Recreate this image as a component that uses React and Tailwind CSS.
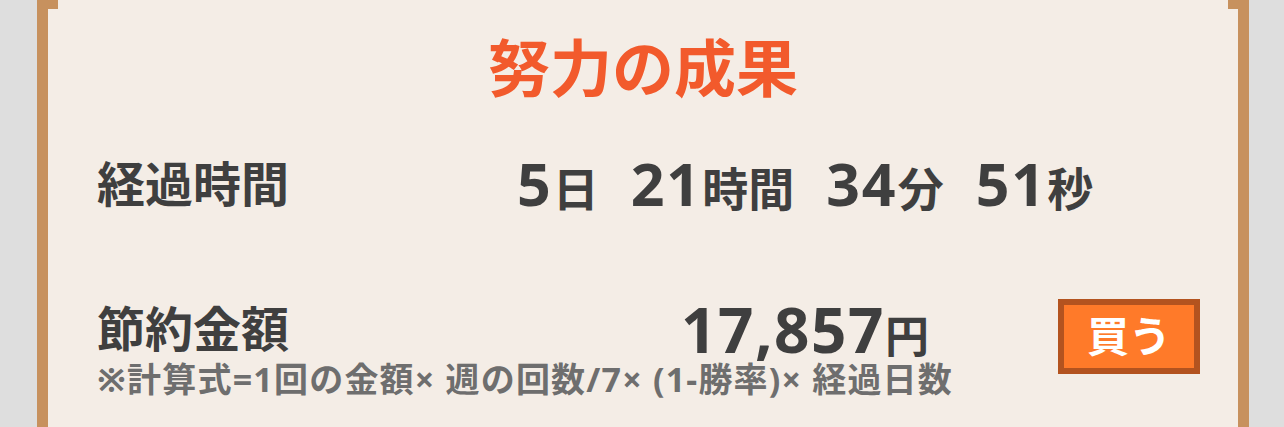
const font = { fontFamily: '"Noto Sans", "Noto Sans CJK JP", sans-serif' }

const TimePart = ({ num, unit }) => (
  <span className="flex items-baseline">
    <span className="text-[59px] leading-none tracking-[2px]">{num}</span>
    <span className="text-[46px] leading-none">{unit}</span>
  </span>
)

export default function App() {
  const elapsed = [
    { num: '5', unit: '日' },
    { num: '21', unit: '時間' },
    { num: '34', unit: '分' },
    { num: '51', unit: '秒' },
  ]

  return (
    <div className="h-[427px] overflow-hidden bg-[#dedede] pl-[37px]" style={font}>
      <div className="h-full w-[1212px] border-x-[11px] border-[#c7915e] bg-[#f4ede6] font-bold">
        {/* top corner tabs */}
        <div className="flex h-[9px] justify-between">
          <span className="w-[10px] bg-[#c7915e]" />
          <span className="w-[10px] bg-[#c7915e]" />
        </div>

        <h1 className="mt-[28px] text-center text-[62px] leading-none text-[#f25a2c]">努力の成果</h1>

        <div className="mt-[55px] grid grid-cols-[275px_1fr] items-center pl-[49px] text-[#3f3f3f]">
          <span className="text-[48px] leading-none">経過時間</span>
          <div className="flex items-baseline justify-center gap-[32px]">
            {elapsed.map((p) => (
              <TimePart key={p.unit} num={p.num} unit={p.unit} />
            ))}
          </div>
        </div>

        <div className="mt-[85px] grid grid-cols-[275px_1fr] items-center pl-[49px] text-[#3f3f3f]">
          <span className="col-start-1 row-start-1 text-[48px] leading-none">節約金額</span>
          <div className="col-start-2 row-start-1 flex items-baseline justify-center">
            <span className="text-[62px] leading-none tracking-[1.5px]">17,857</span>
            <span className="text-[44px] leading-none">円</span>
          </div>
          <button className="col-start-2 row-start-1 -mt-[5px] -mb-[19px] mr-[38px] h-[75px] w-[142px] justify-self-end border-[6px] border-[#b3531f] bg-[#ff7a29] text-[42px] leading-none text-white">
            買う
          </button>
        </div>

        <p className="mt-[2px] pl-[49px] text-[34px] leading-none tracking-[1.2px] text-[#6e6e6e]">
          ※計算式=1回の金額× 週の回数/7× (1-勝率)× 経過日数
        </p>
      </div>
    </div>
  )
}
